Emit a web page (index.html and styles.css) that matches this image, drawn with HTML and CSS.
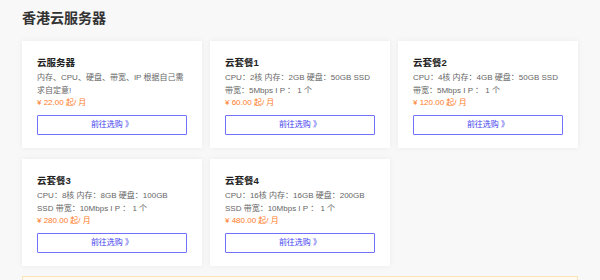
FILE: index.html
```html
<html>
  <head>
    <title>香港云服务器</title>
    <link rel="stylesheet" href="styles.css">
  </head>
  <body>
    <div class="container">
      <h1>香港云服务器</h1>

      <div class="plans">
        <div class="plan">
          <h2>云服务器</h2>
          <p class="desc">内存、CPU、硬盘、带宽、IP 根据自己需<br>求自定意!</p>
          <p class="price">¥ 22.00 起/ 月</p>
          <a class="buy" href="#">前往选购 》</a>
        </div>

        <div class="plan">
          <h2>云套餐1</h2>
          <p class="desc">CPU：2核 内存：2GB 硬盘：50GB SSD<br>带宽：5Mbps I P ： 1 个</p>
          <p class="price">¥ 60.00 起/ 月</p>
          <a class="buy" href="#">前往选购 》</a>
        </div>

        <div class="plan">
          <h2>云套餐2</h2>
          <p class="desc">CPU：4核 内存：4GB 硬盘：50GB SSD<br>带宽：5Mbps I P ： 1 个</p>
          <p class="price">¥ 120.00 起/ 月</p>
          <a class="buy" href="#">前往选购 》</a>
        </div>

        <div class="plan">
          <h2>云套餐3</h2>
          <p class="desc">CPU：8核 内存：8GB 硬盘：100GB<br>SSD 带宽：10Mbps I P ： 1 个</p>
          <p class="price">¥ 280.00 起/ 月</p>
          <a class="buy" href="#">前往选购 》</a>
        </div>

        <div class="plan">
          <h2>云套餐4</h2>
          <p class="desc">CPU：16核 内存：16GB 硬盘：200GB<br>SSD 带宽：10Mbps I P ： 1 个</p>
          <p class="price">¥ 480.00 起/ 月</p>
          <a class="buy" href="#">前往选购 》</a>
        </div>
      </div>

      <div class="notice"></div>
    </div>
  </body>
</html>
```

FILE: styles.css
```css
/* Page */
body {
  margin: 0;
  background: #f8f8f8;
  font-family: "Liberation Sans", "Noto Sans CJK SC", sans-serif;
  color: #333;
}
.container {
  padding: 10px 22px 0;
}
h1 {
  margin: 0 0 15px;
  font-size: 14px;
  line-height: 16px;
  font-weight: bold;
  color: #333;
}

/* Plans */
.plans {
  display: grid;
  grid-template-columns: repeat(3, minmax(0, 1fr));
  gap: 11px 8px;
}
.plan {
  background: #fff;
  padding: 15px 15px 13px;
  box-shadow: 0 0 6px rgba(0, 0, 0, 0.06);
}
.plan h2 {
  margin: 0;
  font-size: 9.5px;
  line-height: 14px;
  font-weight: bold;
  color: #222;
}
.plan .desc {
  margin: 2px 0 0;
  font-size: 8px;
  line-height: 12.5px;
  color: #666;
  white-space: nowrap;
}
.plan .price {
  margin: 0;
  font-size: 8px;
  line-height: 12.5px;
  color: #ff7a26;
}
.plan .buy {
  display: block;
  margin-top: 5.5px;
  height: 18px;
  line-height: 18px;
  border: 1px solid #7070ff;
  border-radius: 1px;
  text-align: center;
  font-size: 8px;
  color: #4343f0;
  text-decoration: none;
}

/* Notice */
.notice {
  margin-top: 10px;
  height: 40px;
  background: #fffbf2;
  border: 1px solid #fde3b6;
}
```
